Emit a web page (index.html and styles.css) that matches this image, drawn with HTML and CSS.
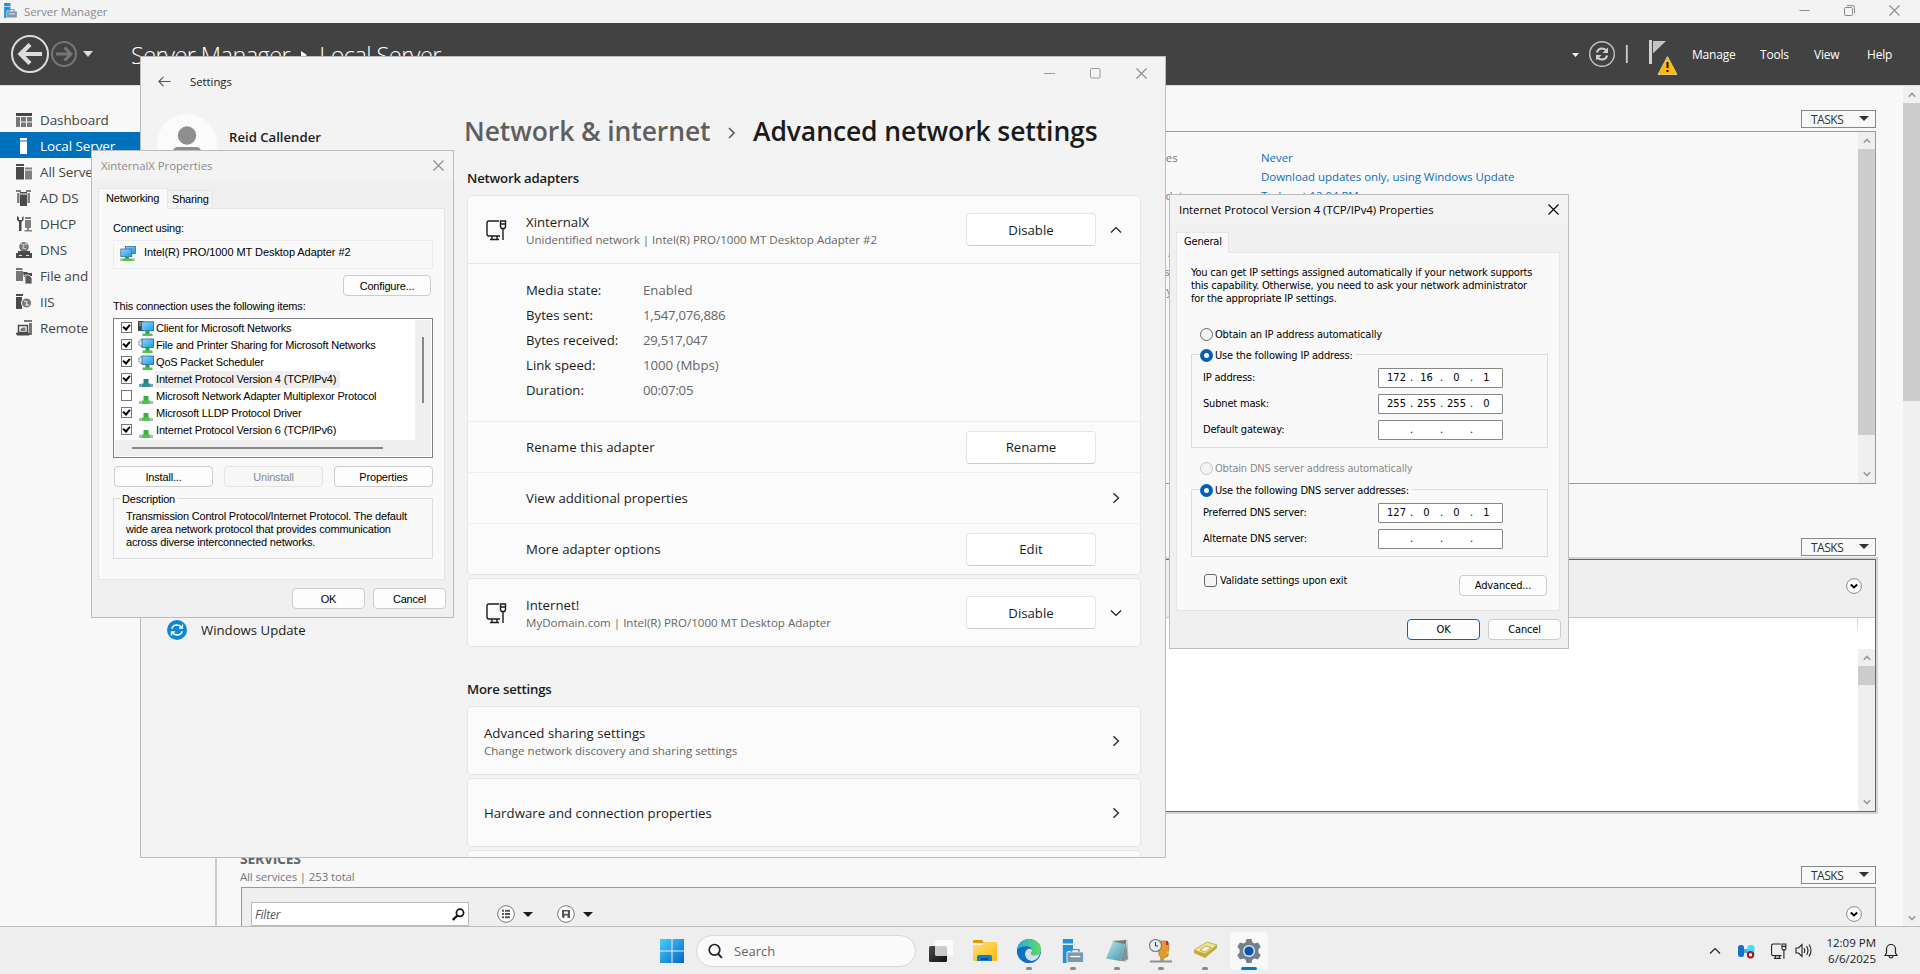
FILE: index.html
```html
<!DOCTYPE html>
<html lang="en">
<head>
<meta charset="utf-8">
<title>Server Manager</title>
<link rel="stylesheet" href="styles.css">
</head>
<body>
<svg class="defs" width="0" height="0">
  <defs>
    <linearGradient id="gWin" x1="0" y1="0" x2="1" y2="1"><stop offset="0" stop-color="#4ccdfb"/><stop offset="1" stop-color="#0067c9"/></linearGradient>
    <linearGradient id="gScr" x1="0" y1="0" x2="1" y2="1"><stop offset="0" stop-color="#8fd6fb"/><stop offset="1" stop-color="#1e9be6"/></linearGradient>
    <linearGradient id="gFold" x1="0" y1="0" x2="1" y2="1"><stop offset="0" stop-color="#ffdf76"/><stop offset="1" stop-color="#fbb812"/></linearGradient>
    <linearGradient id="gEdge" x1="0" y1="0" x2="1" y2="0"><stop offset="0" stop-color="#2aa9e0"/><stop offset="1" stop-color="#5fdc5b"/></linearGradient>
    <linearGradient id="gNote" x1="0" y1="0" x2="1" y2="1"><stop offset="0" stop-color="#b9e6ee"/><stop offset="1" stop-color="#3f93a8"/></linearGradient>
    <linearGradient id="gTask" x1="0" y1="0" x2="1" y2="1"><stop offset="0" stop-color="#4a4a4a"/><stop offset="1" stop-color="#111"/></linearGradient>
  </defs>
  <symbol id="ethernet" viewBox="0 0 22 22"><path d="M14 2H4a2 2 0 0 0-2 2v11a2 2 0 0 0 2 2h11M7 17v3M12 17v3M5 20.500h9" fill="none" stroke="currentColor" stroke-width="1.400"/><path d="M15.500 2h5v6l-1 1.500h-3l-1-1.500zM15.500 5h5M18 10v11" fill="none" stroke="currentColor" stroke-width="1.400"/></symbol>
  <symbol id="right" viewBox="0 0 12 12"><path d="M3.500 1.200 8.500 6l-5 4.800" fill="none" stroke="currentColor" stroke-width="1.200"/></symbol>
  <symbol id="up" viewBox="0 0 12 12"><path d="M1 8.500 6 3.500l5 5" fill="none" stroke="currentColor" stroke-width="1.200"/></symbol>
  <symbol id="down" viewBox="0 0 12 12"><path d="M1 3.500l5 5 5-5" fill="none" stroke="currentColor" stroke-width="1.200"/></symbol>
  <symbol id="sup" viewBox="0 0 8 8"><path d="M.800 5.800 4 2.400l3.200 3.400" fill="none" stroke="#999" stroke-width="1.600"/></symbol>
  <symbol id="sdown" viewBox="0 0 8 8"><path d="M.800 2.200 4 5.600l3.200-3.400" fill="none" stroke="#999" stroke-width="1.600"/></symbol>
  <symbol id="close" viewBox="0 0 11 11"><path d="M.500.500l10 10M10.500.500l-10 10" fill="none" stroke="currentColor" stroke-width="1.100"/></symbol>
  <symbol id="tri" viewBox="0 0 10 5"><path d="M0 0h10L5 5z" fill="currentColor"/></symbol>
  <symbol id="adapter" viewBox="0 0 16 16"><rect x="5.500" y="1.500" width="10" height="7" fill="url(#gScr)" stroke="#3b6c92" stroke-width=".8"/><rect x=".8" y="4" width="11" height="7.500" fill="url(#gScr)" stroke="#3b6c92" stroke-width=".8"/><path d="M5 12h4v2H5z" fill="#2ea233"/><path d="M2 13.500h11V16H2z" fill="#4cc352"/><path d="M0 13.500h2.500V16H0zM12.500 13.500H15V16h-2.500z" fill="#bbb"/></symbol>
  <symbol id="client" viewBox="0 0 16 16"><path d="M0 0h6v10H0z" fill="#444"/><path d="M1 2h2M1 4h2" stroke="#7fdc7f"/><rect x="3.500" y=".8" width="12" height="9" fill="url(#gScr)" stroke="#2d6089" stroke-width=".8"/><path d="M7.500 10h4v3h-4z" fill="#2ea233"/><path d="M4.500 12.500h10V15h-10z" fill="#4cc352"/></symbol>
  <symbol id="service" viewBox="0 0 16 16"><circle cx="4" cy="5" r="3.300" fill="#eee" stroke="#8a959c" stroke-width="1.500" stroke-dasharray="1.600 1"/><rect x="4" y="1" width="11.500" height="8.500" fill="url(#gScr)" stroke="#2d6089" stroke-width=".8"/><path d="M7.500 10h4v3h-4z" fill="#2ea233"/><path d="M4.500 12.500h10V15h-10z" fill="#4cc352"/></symbol>
  <symbol id="proto" viewBox="0 0 16 16"><path d="M5.500 7h5v6h-5z" fill="#3fae42"/><path d="M3.500 11.500h9V15h-9z" fill="#4cc352"/><path d="M1 12h2.500v3H1zM12.500 12H15v3h-2.500z" fill="#b5b5b5"/></symbol>
  <symbol id="protosel" viewBox="0 0 16 16"><path d="M5.500 7h5v6h-5z" fill="#23808a"/><path d="M3.500 11.500h9V15h-9z" fill="#2b949a"/><path d="M1 12h2.500v3H1zM12.500 12H15v3h-2.500z" fill="#6f98c4"/></symbol>
  <symbol id="smgr" viewBox="0 0 24 26"><path d="M1 0h11v5H1zM1 6.500h11V26H1z" fill="#2291dd"/><path d="M9 13h2l1.500-2.500h7L21 13h3v13H5V15q0-2 2-2z" fill="#eef2f4"/><path d="M6 14.500h17V25H6z" fill="#7b98ac"/><path d="M10.500 14v-2.500h8V14M9 19h11M10.500 17.500 9 19l1.500 1.500M18.500 17.500 20 19l-1.500 1.500" fill="none" stroke="#6e8da3" stroke-width="1.500"/><path d="M9 19h11" stroke="#fff" stroke-width="1.500"/></symbol>
</svg>

<div class="desktop">
  <div class="sm">
    <div class="sm-title">
      <svg width="15" height="15"><use href="#smgr"/></svg><span class="s12 grow">Server Manager</span>
      <svg width="11" height="11" viewBox="0 0 11 11"><path d="M.500 5.500h10" stroke="#888"/></svg>
      <svg width="11" height="11" viewBox="0 0 11 11"><path d="M.5 3.500a1 1 0 0 1 1-1h6a1 1 0 0 1 1 1v6a1 1 0 0 1-1 1h-6a1 1 0 0 1-1-1zM3 .6h5.500a2 2 0 0 1 2 2V8" fill="none" stroke="#888"/></svg>
      <svg width="11" height="11" class="grey"><use href="#close"/></svg>
    </div>
    <div class="sm-head">
      <svg width="84" height="40" viewBox="0 0 84 40"><circle cx="20" cy="20" r="18" fill="none" stroke="#dcdcdc" stroke-width="2"/><path d="M32 20H11M20 10.500 10.500 20l9.500 9.500" fill="none" stroke="#dcdcdc" stroke-width="4.200"/><circle cx="54" cy="20" r="12" fill="none" stroke="#777" stroke-width="2"/><path d="M46 20h14M54.500 13.500 61 20l-6.500 6.500" fill="none" stroke="#777" stroke-width="3"/><path d="M73 17h10l-5 6z" fill="#dcdcdc"/></svg>
      <div class="crumb"><span class="c1">Server Manager</span><i></i><span class="c2">Local Server</span></div>
      <svg class="tools" width="110" height="40" viewBox="0 0 110 40"><path d="M2 19h7l-3.500 4z" fill="#fff"/><circle cx="32" cy="20" r="12.300" fill="none" stroke="#c4c4c4" stroke-width="1.400"/><path d="M27 18.500q1-4 5-4 3 0 4.500 2.200M37 21.500q-1 4-5 4-3 0-4.500-2.200" fill="none" stroke="#d0d0d0" stroke-width="2.200"/><path d="M38 13.500v5.500h-5.500zM26 26.500V21h5.500z" fill="#d0d0d0"/><path d="M56.800 11v18" stroke="#d0d0d0" stroke-width="1.800"/><path d="M79 6h3v24h-3z" fill="#d0d0d0"/><path d="M83 7h13L83 19.500z" fill="#c4c4c4"/><path d="M97.500 22.500 107 40.500H88z" fill="#ffb900" stroke="#e9d9a0" stroke-width=".8"/><path d="M97.500 28v6M97.500 36v2" stroke="#111" stroke-width="2"/></svg>
      <nav><span>Manage</span><span>Tools</span><span>View</span><span>Help</span></nav>
    </div>
    <div class="sm-body">
      <aside>
        <div class="it"><svg width="16" height="16" viewBox="0 0 16 16"><path d="M0 1h16v3H0z" fill="#444"/><path d="M0 5h4v10H0zM5 5h5v4.500H5zM11 5h5v4.500h-5zM5 10.500h5V15H5zM11 10.500h5V15h-5z" fill="#777"/></svg>Dashboard</div>
        <div class="it on"><svg width="16" height="16" viewBox="0 0 16 16"><path d="M4 0h7v2.500H4zM4 3.500h7V16H4z" fill="#fff"/></svg>Local Server</div>
        <div class="it"><svg width="16" height="16" viewBox="0 0 16 16"><path d="M0 0h8v2H0zM0 3h8v12.500H0z" fill="#4a4a4a"/><path d="M9 3.500h7v2H9zM9 6.500h7v9H9z" fill="#808080"/></svg>All Servers</div>
        <div class="it"><svg width="16" height="16" viewBox="0 0 16 16"><path d="M0 0h5v2H0zM10 0h5v2h-5zM1 3h2.500v10H1zM11.500 3H14v10h-2.500z" fill="#808080"/><path d="M4 2h7v1.500H4zM4 4.500h7V16H4z" fill="#4a4a4a"/></svg>AD DS</div>
        <div class="it"><svg width="16" height="16" viewBox="0 0 16 16"><path d="M1 0v4l2 2v9h2.500V6l2-2V0L6 1.500V4H3V1.500z" fill="#4a4a4a"/><path d="M9 1h6v2H9zM9 4h6v8H9zM11 12h2v2h3v1.500H8.500V14H11z" fill="#808080"/></svg>DHCP</div>
        <div class="it"><svg width="16" height="16" viewBox="0 0 16 16"><circle cx="8" cy="4.800" r="4.800" fill="#777"/><path d="M5 2l3 1-1 3 3 1M9 1l2 2" stroke="#ccc" fill="none" stroke-width="1.300"/><path d="M2 9h12v2H2zM0 11h16v5H0z" fill="#4a4a4a"/><path d="M3 13.500h3M10 13.500h3" stroke="#ddd"/></svg>DNS</div>
        <div class="it"><svg width="16" height="16" viewBox="0 0 16 16"><path d="M0 0h6l1 2H0zM0 3h7v10H0z" fill="#777"/><path d="M7 4h4l1 1h4v3h-3L8 9z" fill="#4a4a4a"/><path d="M9 7h4l3 3v6H9z" fill="#5a5a5a" stroke="#f8f8f8" stroke-width=".8"/></svg>File and Storage</div>
        <div class="it"><svg width="16" height="16" viewBox="0 0 16 16"><path d="M0 0h7v2H0zM0 3h6v12H0z" fill="#4a4a4a"/><circle cx="10.500" cy="9" r="5" fill="#777" stroke="#f8f8f8"/><path d="M8 7l3 1-1 3 3 0" stroke="#ddd" fill="none" stroke-width="1.300"/></svg>IIS</div>
        <div class="it"><svg width="16" height="16" viewBox="0 0 16 16"><path d="M8 0h8v2H8zM13 3h3v12h-3z" fill="#777"/><path d="M2.500 5.500h9v7h-9zM0 13.500h13" fill="none" stroke="#4a4a4a" stroke-width="1.500"/><path d="M4.500 11V9l2-1.500h3V11z" fill="#777"/><path d="M0 13h14l-1 2.500H1z" fill="#4a4a4a"/></svg>Remote Access</div>
      </aside>
      <main>
        <section class="sec1">
          <div class="sechead"><div class="tasks"><span>TASKS</span><svg width="10" height="5"><use href="#tri"/></svg></div></div>
          <div class="panel p1">
            <div class="props">
              <span>Last installed updates</span><b>Never</b>
              <span>Windows Update</span><b>Download updates only, using Windows Update</b>
              <span>Last checked for updates</span><b>Today at 12:04 PM</b>
              <span></span><b></b><span></span><b></b>
              <span>Microsoft Defender Antivirus</span><b></b>
              <span>Feedback &amp; Diagnostics</span><b></b>
              <span>IE Enhanced Security Config</span><b></b>
            </div>
            <div class="sb"><svg width="8" height="8"><use href="#sup"/></svg><i></i><svg width="8" height="8"><use href="#sdown"/></svg></div>
          </div>
        </section>
        <section class="sec2">
          <div class="sechead"><div class="tasks"><span>TASKS</span><svg width="10" height="5"><use href="#tri"/></svg></div></div>
          <div class="panel p2">
            <div class="bar"><svg width="16" height="16" viewBox="0 0 16 16"><circle cx="8" cy="8" r="7.400" fill="#fff" stroke="#8a8a8a"/><path d="M4.800 6.500 8 9.500l3.200-3" fill="none" stroke="#000" stroke-width="2"/></svg></div>
            <div class="thead"></div>
            <div class="sb"><svg width="8" height="8"><use href="#sup"/></svg><i></i><svg width="8" height="8"><use href="#sdown"/></svg></div>
          </div>
        </section>
        <section class="sec3">
          <div class="sechead"><div class="ttl"><h2>SERVICES</h2><p>All services | 253 total</p></div><div class="tasks"><span>TASKS</span><svg width="10" height="5"><use href="#tri"/></svg></div></div>
          <div class="panel p3">
            <div class="filter"><em>Filter</em><svg width="13" height="13" viewBox="0 0 13 13"><circle cx="8" cy="4.800" r="3.600" fill="none" stroke="#111" stroke-width="1.700"/><path d="M5.500 7.500.800 12" stroke="#111" stroke-width="2.400"/></svg></div>
            <div class="pick"><svg width="18" height="18" viewBox="0 0 18 18"><circle cx="9" cy="9" r="8.300" fill="#fff" stroke="#777"/><path d="M5 5.800h2M5 9h2M5 12.200h2M8 5.800h5M8 9h5M8 12.200h5" stroke="#555" stroke-width="2"/></svg><svg width="10" height="5"><use href="#tri"/></svg></div>
            <div class="pick"><svg width="18" height="18" viewBox="0 0 18 18"><circle cx="9" cy="9" r="8.300" fill="#fff" stroke="#777"/><path d="M5 5h8v8H6l-1-1zM7 6.500v2.300h4V6.500zM7.500 13v-2.500h3V13z" fill="#555" fill-rule="evenodd"/></svg><svg width="10" height="5"><use href="#tri"/></svg></div>
            <svg class="exp" width="16" height="16" viewBox="0 0 16 16"><circle cx="8" cy="8" r="7.400" fill="#fff" stroke="#8a8a8a"/><path d="M4.800 6.500 8 9.500l3.200-3" fill="none" stroke="#000" stroke-width="2"/></svg>
          </div>
        </section>
      </main>
      <div class="sb big"><svg width="8" height="8"><use href="#sup"/></svg><i></i><svg width="8" height="8"><use href="#sdown"/></svg></div>
    </div>
  </div>

  <div class="taskbar">
    <div class="tb-mid">
      <svg class="start" width="24" height="24" viewBox="0 0 24 24"><path d="M0 0h11.500v11.500H0zM12.500 0H24v11.500H12.500zM0 12.500h11.500V24H0zM12.500 12.500H24V24H12.500z" fill="url(#gWin)"/></svg>
      <div class="search"><svg width="16" height="16" viewBox="0 0 16 16"><circle cx="7.500" cy="6.800" r="5.300" fill="none" stroke="#222" stroke-width="1.700"/><path d="M11.200 10.800l3.600 4" stroke="#222" stroke-width="2"/></svg><span>Search</span></div>
      <div class="app"><svg width="24" height="24" viewBox="0 0 24 24"><rect y="7" width="18" height="16" rx="1.500" fill="url(#gTask)"/><rect x="6" y="1" width="18" height="16" rx="1.500" fill="#fff" opacity=".75"/></svg></div>
      <div class="app"><svg width="24" height="24" viewBox="0 0 24 24"><path d="M0 2q0-1 1-1h8l2 3H0z" fill="#d99a00"/><path d="M0 6h9l2-3h12q1 0 1 1v18H0z" fill="url(#gFold)"/><path d="M4 22v-4q0-2 2-2h11q2 0 2 2v4z" fill="#0f7bd0"/><path d="M8 20h7" stroke="#0a4f94" stroke-width="2"/></svg></div>
      <div class="app run"><svg width="24" height="24" viewBox="0 0 24 24"><circle cx="12" cy="12" r="12" fill="#0f64b4"/><path d="M.500 10C2 3 7 0 12 0c7 0 12 5 12 10.500 0 4-3 6-6.500 6-2.500 0-3.500-1-3.500-2 0-.8 1-1.500 1-3 0-2-2-4-5-4C5 7.500 1 11 .500 10z" fill="url(#gEdge)"/><path d="M8 15c0-3 2-5.500 4-5.500 2 0 3 1 3 2s-1 2-1 3 1 2 3.500 2c2 0 4-.7 5.500-2.500-1 5-5 8-8.500 8C11 22 8 19 8 15z" fill="#ededed" opacity=".9"/><path d="M8 15c0 5 4 7 7 7 2 0 4-.6 5.500-2C18 23 15 24 12 24 6 24 .500 19 .300 13 .500 9 4 7.500 8 7.500c2.500 0 5 .8 6.200 2.200C11 8.500 8 11 8 15z" fill="#0d72c6"/></svg></div>
      <div class="app run"><svg width="24" height="24"><use href="#smgr"/></svg></div>
      <div class="app run"><svg width="24" height="24" viewBox="0 0 24 24"><path d="M8 2 22 1l1 19-3 3-3-2z" fill="#e9e9e9" stroke="#999" stroke-width=".5"/><path d="M8 2.500h13L15 22 1 19.500z" fill="url(#gNote)"/><path d="M8 2.500 21 1v3l-1 1z" fill="#777"/><path d="M21 3l2 17-4 2-4 0z" fill="#7e929a"/></svg></div>
      <div class="app run"><svg width="24" height="24" viewBox="0 0 24 24"><path d="M9 2h8l3 2-1 13-6 3-3-4z" fill="#e59a2d" stroke="#9a6417" stroke-width=".6"/><path d="M17 2h2v4h-2z" fill="#d22"/><path d="M18 12h2v3h-2z" fill="#e8c21b"/><circle cx="6.500" cy="6.500" r="6" fill="#e8edf2" stroke="#7b7f84" stroke-width="1.200"/><path d="M6.500 3v4H9" stroke="#333" fill="none"/><path d="M11 18h4v4h-4z" fill="#c9a240"/><path d="M1 21.500h22v2H1z" fill="#8c9298"/></svg></div>
      <div class="app run"><svg width="24" height="24" viewBox="0 0 24 24"><path d="M1 11 14 3l10 3-12 9z" fill="#f3e58a" stroke="#a08b27" stroke-width=".6"/><path d="M1 11l11 4v4L1 14zM12 15l12-9v3l-12 10z" fill="#c5a93a"/><path d="M7 11l6-4 5 1.500-6 4.500z" fill="#fffbe0" stroke="#8a7a2a" stroke-width=".6"/></svg></div>
      <div class="app act"><svg width="24" height="24" viewBox="0 0 24 24"><path d="M9.500 0h5l.8 3.300 2.200 1.200L21 3.500l2.700 4.300-2.300 2.700v3l2.300 2.700L21 20.500l-3.500-1-2.200 1.200-.8 3.300h-5l-.8-3.300-2.200-1.200-3.500 1L.300 16.200l2.300-2.700v-3L.300 7.800 3 3.500l3.500 1 2.200-1.200z" fill="#74808b"/><circle cx="12" cy="12" r="6" fill="#dfe9f2"/><circle cx="12" cy="12" r="4.600" fill="#0b57b0"/></svg></div>
    </div>
    <div class="tray">
      <svg width="12" height="12"><use href="#up"/></svg>
      <svg class="t2" width="17" height="16" viewBox="0 0 17 16"><rect y="2" width="6" height="12" rx="2.500" fill="#1173cf"/><path d="M6 6h4v4H6z" fill="#4aa6e4"/><rect x="9.500" y="2" width="7" height="11" rx="2.500" fill="#45ddf5"/><circle cx="12.500" cy="11.800" r="2.700" fill="#fff" stroke="#b01018" stroke-width="2"/></svg>
      <svg class="t3" width="17" height="18"><use href="#ethernet"/></svg>
      <svg class="t4" width="17" height="15" viewBox="0 0 17 15"><path d="M1 5h2.500L7 1.500v12L3.500 10H1z" fill="none" stroke="#222" stroke-width="1.100"/><path d="M9 5q1.500 2.500 0 5M11.500 3q3 4.500 0 9M14 1.500q4 6 0 12" fill="none" stroke="#222" stroke-width="1.100"/></svg>
      <div class="clock"><div>12:09 PM</div><div>6/6/2025</div></div>
      <svg class="t5" width="14" height="16" viewBox="0 0 14 16"><path d="M1 12.500 2.500 10V6a4.500 4.500 0 0 1 9 0v4l1.500 2.500zM5 13q.5 2 2 2t2-2" fill="none" stroke="#222" stroke-width="1.200"/></svg>
    </div>
  </div>

  <div class="win settings">
    <div class="st-side">
      <div class="st-top"><svg width="13" height="11" viewBox="0 0 13 11"><path d="M12.500 5.500H1M5.500.800.800 5.500l4.700 4.700" fill="none" stroke="#555" stroke-width="1.100"/></svg><span class="s12">Settings</span></div>
      <div class="user"><svg width="60" height="60" viewBox="0 0 60 60"><circle cx="30" cy="30" r="30" fill="#fbfbfb"/><circle cx="30" cy="21.500" r="9.200" fill="#8e8e8e"/><path d="M16 45V38q0-5 5-5h18q5 0 5 5v7q-14 10-28 0z" fill="#8e8e8e"/></svg><div><b>Reid Callender</b><span>reid.callender@mydomain.com</span></div></div>
      <div class="wu"><svg width="20" height="20" viewBox="0 0 20 20"><circle cx="10" cy="10" r="10" fill="#0f87d9"/><path d="M4.800 8.800Q6 5 10 5q3 0 4.700 2.500M15.200 11.200Q14 15 10 15q-3 0-4.700-2.500" fill="none" stroke="#fff" stroke-width="1.500"/><path d="M15.500 4.500V8H12M4.500 15.500V12H8" fill="none" stroke="#fff" stroke-width="1.300"/></svg><span>Windows Update</span></div>
    </div>
    <div class="st-main">
      <div class="st-ctl"><svg width="11" height="11" viewBox="0 0 11 11"><path d="M0 5.500h11" stroke="#999"/></svg><svg width="11" height="11" viewBox="0 0 11 11"><rect x=".5" y=".5" width="9.500" height="9.500" rx="1" fill="none" stroke="#999"/></svg><svg width="11" height="11" class="grey"><use href="#close"/></svg></div>
      <h1><span class="h-a">Network &amp; internet</span><svg width="10" height="14" viewBox="0 0 10 14"><path d="M2 2l5 5-5 5" fill="none" stroke="#5f5f5f" stroke-width="1.700"/></svg><span class="h-b">Advanced network settings</span></h1>
      <h3 class="na">Network adapters</h3>
      <div class="card">
        <div class="crow tall"><svg class="eth" width="22" height="22"><use href="#ethernet"/></svg><div class="tx"><div>XinternalX</div><small>Unidentified network | Intel(R) PRO/1000 MT Desktop Adapter #2</small></div><button>Disable</button><svg class="ch" width="12" height="12"><use href="#up"/></svg></div>
        <dl><dt>Media state:</dt><dd>Enabled</dd><dt>Bytes sent:</dt><dd class="nm">1,547,076,886</dd><dt>Bytes received:</dt><dd class="nm">29,517,047</dd><dt>Link speed:</dt><dd>1000 (Mbps)</dd><dt>Duration:</dt><dd class="nm">00:07:05</dd></dl>
        <div class="crow ind"><div class="tx">Rename this adapter</div><button>Rename</button></div>
        <div class="crow ind nb"><div class="tx">View additional properties</div><svg class="ch" width="12" height="12"><use href="#right"/></svg></div>
        <div class="crow ind"><div class="tx">More adapter options</div><button>Edit</button></div>
      </div>
      <div class="card next"><div class="crow tall"><svg class="eth" width="22" height="22"><use href="#ethernet"/></svg><div class="tx"><div>Internet!</div><small>MyDomain.com | Intel(R) PRO/1000 MT Desktop Adapter</small></div><button>Disable</button><svg class="ch" width="12" height="12"><use href="#down"/></svg></div></div>
      <h3 class="ms">More settings</h3>
      <div class="card"><div class="crow tall nb"><div class="tx"><div>Advanced sharing settings</div><small>Change network discovery and sharing settings</small></div><svg class="ch" width="12" height="12"><use href="#right"/></svg></div></div>
      <div class="card next"><div class="crow tall nb"><div class="tx">Hardware and connection properties</div><svg class="ch" width="12" height="12"><use href="#right"/></svg></div></div>
      <div class="card next"><div class="crow tall"></div></div>
    </div>
  </div>

  <div class="win dlg xd">
    <div class="dt grey"><span class="s12">XinternalX Properties</span><svg width="11" height="11"><use href="#close"/></svg></div>
    <div class="tabs"><div class="tab on">Networking</div><div class="tab">Sharing</div></div>
    <div class="pane">
      <label class="l1">Connect using:</label>
      <div class="nic"><svg width="16" height="16"><use href="#adapter"/></svg><span>Intel(R) PRO/1000 MT Desktop Adapter #2</span></div>
      <div class="right"><div class="btn w88">Configure...</div></div>
      <label class="l2">This connection uses the following items:</label>
      <div class="list">
        <div class="lrow">
          <div class="items">
            <div class="li"><i class="ck on"></i><svg width="16" height="16"><use href="#client"/></svg><span>Client for Microsoft Networks</span></div>
            <div class="li"><i class="ck on"></i><svg width="16" height="16"><use href="#service"/></svg><span>File and Printer Sharing for Microsoft Networks</span></div>
            <div class="li"><i class="ck on"></i><svg width="16" height="16"><use href="#service"/></svg><span>QoS Packet Scheduler</span></div>
            <div class="li sel"><i class="ck on"></i><svg width="16" height="16"><use href="#protosel"/></svg><span>Internet Protocol Version 4 (TCP/IPv4)</span></div>
            <div class="li"><i class="ck"></i><svg width="16" height="16"><use href="#proto"/></svg><span>Microsoft Network Adapter Multiplexor Protocol</span></div>
            <div class="li"><i class="ck on"></i><svg width="16" height="16"><use href="#proto"/></svg><span>Microsoft LLDP Protocol Driver</span></div>
            <div class="li"><i class="ck on"></i><svg width="16" height="16"><use href="#proto"/></svg><span>Internet Protocol Version 6 (TCP/IPv6)</span></div>
          </div>
          <div class="vs"><i></i></div>
        </div>
        <div class="hs"><i></i></div>
      </div>
      <div class="brow"><div class="btn w99">Install...</div><div class="btn w99 dis">Uninstall</div><div class="btn w99">Properties</div></div>
      <fieldset><legend>Description</legend><p>Transmission Control Protocol/Internet Protocol. The default<br>wide area network protocol that provides communication<br>across diverse interconnected networks.</p></fieldset>
    </div>
    <div class="foot"><div class="btn w73">OK</div><div class="btn w73">Cancel</div></div>
  </div>

  <div class="win dlg ip">
    <div class="dt"><span class="s12">Internet Protocol Version 4 (TCP/IPv4) Properties</span><svg width="11" height="11"><use href="#close"/></svg></div>
    <div class="tabs"><div class="tab on">General</div></div>
    <div class="pane">
      <p>You can get IP settings assigned automatically if your network supports<br>this capability. Otherwise, you need to ask your network administrator<br>for the appropriate IP settings.</p>
      <div class="rad r1"><i></i><span>Obtain an IP address automatically</span></div>
      <div class="grp g1">
        <div class="rad"><i class="on"></i><span>Use the following IP address:</span></div>
        <div class="fr"><label>IP address:</label><div class="ipf"><b>172</b><u>.</u><b>16</b><u>.</u><b>0</b><u>.</u><b>1</b></div></div>
        <div class="fr"><label>Subnet mask:</label><div class="ipf"><b>255</b><u>.</u><b>255</b><u>.</u><b>255</b><u>.</u><b>0</b></div></div>
        <div class="fr"><label>Default gateway:</label><div class="ipf"><b></b><u>.</u><b></b><u>.</u><b></b><u>.</u><b></b></div></div>
      </div>
      <div class="rad r3 dis"><i></i><span>Obtain DNS server address automatically</span></div>
      <div class="grp g2">
        <div class="rad"><i class="on"></i><span>Use the following DNS server addresses:</span></div>
        <div class="fr"><label>Preferred DNS server:</label><div class="ipf"><b>127</b><u>.</u><b>0</b><u>.</u><b>0</b><u>.</u><b>1</b></div></div>
        <div class="fr"><label>Alternate DNS server:</label><div class="ipf"><b></b><u>.</u><b></b><u>.</u><b></b><u>.</u><b></b></div></div>
      </div>
      <div class="val"><i></i><span>Validate settings upon exit</span><div class="btn w88">Advanced...</div></div>
    </div>
    <div class="foot"><div class="btn w73 def">OK</div><div class="btn w73">Cancel</div></div>
  </div>
</div>
</body>
</html>
```
FILE: styles.css
```css
* { box-sizing: border-box; }
body, h1, h2, h3, p, dl, dd, fieldset { margin: 0; padding: 0; }
body { font-family: "Open Sans", "Noto Sans", sans-serif; font-size: 13px; color: #1b1b1b; overflow: hidden; }
svg { display: block; flex: none; }
.defs { position: absolute; }
.desktop { position: relative; width: 1920px; height: 974px; overflow: hidden; display: flex; flex-direction: column; }
.s12 { font-size: 11.4px; letter-spacing: -0.05px; white-space: nowrap; }
.grow { flex: 1; }
.grey { color: #8c8c8c; }

/* Server Manager */
.sm { height: 926px; display: flex; flex-direction: column; background: #f8f8f8; }
.sm-title { height: 23px; flex: none; background: #f3f3f3; display: flex; align-items: center; gap: 34px; padding: 0 20px 3px 3px; color: #8a8a8a; }
.sm-title .s12 { margin-left: -28px; padding-top: 3px; }
.sm-head { height: 63px; flex: none; background: #424242; border-bottom: 1px solid #ddd; display: flex; align-items: center; padding: 0 28px 0 10px; color: #fff; }
.crumb { flex: 1; display: flex; align-items: center; margin-left: 37px; padding-top: 2px; font-size: 23.500px; font-weight: 300; white-space: nowrap; }
.crumb i { border: 4px solid transparent; border-left: 6px solid #fff; border-right: 0; margin: 0 12px 0 11px; }
.c1, .c2 { letter-spacing: -0.57px; }
.tools { overflow: visible; }
.sm-head nav { display: flex; font-size: 12px; letter-spacing: -0.2px; margin-left: 12px; }
.sm-head nav span { width: 68px; }
.sm-head nav span:nth-child(2) { width: 54px; }
.sm-head nav span:nth-child(3) { width: 53px; }
.sm-head nav span:nth-child(4) { width: 25px; }
.sm-body { flex: 1; min-height: 0; display: flex; overflow: hidden; }
aside { width: 217px; border-right: 2px solid #ccc; padding-top: 20px; }
.it { height: 26px; display: flex; align-items: center; gap: 8px; padding: 1px 0 0 16px; font-size: 13.500px; color: #444; letter-spacing: -0.1px; white-space: nowrap; }
.it.on { background: #0072bd; color: #fff; }
main { flex: 1; min-width: 0; padding: 24px 27px 0 24px; display: flex; flex-direction: column; }
.sec2 { margin-top: 54px; }
.sec3 { margin-top: 37px; }
.sechead { display: flex; justify-content: flex-end; align-items: flex-end; margin-bottom: 3px; }
.ttl { flex: 1; height: 35px; margin-left: -1px; color: #777; }
.ttl h2 { font-size: 14px; line-height: 20px; letter-spacing: -0.3px; color: #666; }
.ttl p { font-size: 11.500px; line-height: 15px; letter-spacing: -0.15px; }
.tasks { width: 75px; height: 18px; border: 1px solid #888; display: flex; align-items: center; justify-content: space-between; padding: 0 6px 0 9px; font-size: 12px; letter-spacing: -0.5px; color: #333; }
.tasks svg { margin-bottom: 1px; }
.panel { border: 1px solid #999; display: flex; }
.p1 { height: 353px; }
.props { flex: 1; display: grid; grid-template-columns: 199px 1fr; grid-auto-rows: 19px; align-content: start; padding: 16px 0 0 820px; font-size: 11.500px; letter-spacing: -0.05px; line-height: 19px; color: #777; white-space: nowrap; }
.props b { font-weight: 400; color: #0b70bd; }
.sb { width: 17px; background: #efefef; display: flex; flex-direction: column; align-items: center; padding: 5px 0; }
.sb i { width: 17px; background: #cdcdcd; margin-top: 4px; height: 286px; }
.sb svg:last-child { margin-top: auto; }
.big { background: #f0f0f0; }
.big i { height: 298px; }
.big svg:last-child { margin-bottom: -1px; }
.p2 { height: 253px; border-color: #666; background: #fff; box-shadow: 0 0 0 2px #d6d6d6; flex-direction: column; }
.p2 .bar { height: 58px; background: #efefef; border-bottom: 1px solid #c4c4c4; display: flex; justify-content: flex-end; padding: 18px 13px 0 0; }
.thead { height: 31px; margin-right: 17px; background: linear-gradient(#ccc, #fff 60%) right / 1px 100% no-repeat; }
.p2 .sb { flex: 1; align-self: flex-end; }
.p2 .sb i { height: 19px; }
.p3 { height: 60px; background: #efefef; padding: 14px 13px 0 9px; align-items: flex-start; }
.filter { width: 218px; height: 24px; border: 1px solid #bbb; background: #fff; display: flex; align-items: center; justify-content: space-between; padding: 0 3px; font-size: 12px; color: #555; }
.filter em { letter-spacing: -0.2px; }
.pick { display: flex; align-items: center; gap: 8px; margin: 3px 0 0 28px; }
.pick + .pick { margin-left: 24px; }
.exp { margin: 4px 0 0 auto; }

/* Taskbar */
.taskbar { height: 48px; background: #eee; border-top: 1px solid #bdbdbd; display: flex; justify-content: space-between; }
.tb-mid { display: flex; align-items: center; margin-left: 660px; }
.search { width: 220px; height: 32px; border: 1px solid #d8d8d8; border-radius: 16px; background: #fafafa; margin: 0 6px 0 12px; display: flex; align-items: center; gap: 11px; padding-left: 10px; font-size: 13px; color: #666; }
.app { width: 38px; height: 38px; margin-right: 6px; border-radius: 4px; display: flex; flex-direction: column; align-items: center; padding-top: 7px; }
.run::after { content: ""; width: 6px; height: 3px; border-radius: 2px; background: #8a8a8a; margin-top: 4px; }
.act { background: #f9f9f9; }
.act::after { content: ""; width: 16px; height: 3px; border-radius: 2px; background: #0078d4; margin-top: 4px; }
.tray { display: flex; align-items: center; padding-right: 22px; color: #222; }
.t2 { margin-left: 17px; }
.t3 { margin-left: 15px; }
.t4 { margin-left: 8px; }
.clock { width: 64px; text-align: right; font-size: 11.500px; line-height: 16px; }
.t5 { margin-left: 8px; }

/* Window frames */
.win { position: absolute; border: 1px solid #bcbcbc; overflow: hidden; }
.settings { left: 140px; top: 56px; width: 1026px; height: 802px; background: #f3f3f3; display: flex; }
.st-side { width: 326px; padding-left: 16px; }
.st-top { display: flex; align-items: center; gap: 19px; height: 48px; padding-left: 1px; }
.user { display: flex; gap: 12px; margin-top: 9px; height: 60px; white-space: nowrap; }
.user div { padding-top: 14px; display: flex; flex-direction: column; }
.user b { font-size: 13.200px; line-height: 18px; font-weight: 600; letter-spacing: -0.02px; }
.user span { font-size: 11.300px; line-height: 15px; }
.wu { display: flex; align-items: center; gap: 14px; margin-top: 446px; padding-left: 10px; font-size: 13.200px; height: 20px; }
.st-main { width: 674px; }
.st-ctl { height: 32px; display: flex; align-items: center; justify-content: flex-end; gap: 35px; margin-right: -6px; }
h1 { display: flex; align-items: center; height: 44px; margin: 20px 0 0 -3px; font-size: 26.500px; font-weight: 600; white-space: nowrap; }
h1 svg { margin: 3px 16px 0 18px; }
.h-a { color: #5f5f5f; width: 245px; letter-spacing: -0.1px; }
.h-b { letter-spacing: -0.1px; }
h3 { font-size: 13.200px; line-height: 20px; font-weight: 600; letter-spacing: -0.2px; }
.na { margin: 15px 0 7px; }
.ms { margin: 32px 0 7px; }
.card { border: 1px solid #e5e5e5; border-radius: 4px; background: #fbfbfb; font-size: 13.200px; }
.next { margin-top: 3px; }
.crow { display: flex; align-items: center; height: 51px; border-top: 1px solid #eee; }
.crow button, .crow .ch { margin-left: auto; }
.crow.tall { height: 67px; border-top: 0; padding: 0 18px 0 17px; }
.crow.tall.nb { padding-left: 16px; }
.tall button + .ch { margin-left: 14px; }
.ind { padding: 0 44px 0 58px; }
.ind.nb { padding-right: 18px; }
.eth { margin-right: 19px; }
.tx { line-height: 20px; white-space: nowrap; letter-spacing: 0.03px; }
.tx small { display: block; font-size: 11.550px; line-height: 16px; color: #666; letter-spacing: 0; }
.crow button { width: 130px; height: 33px; font: inherit; color: inherit; background: #fff; border: 1px solid #e5e5e5; border-bottom-color: #ccc; border-radius: 4px; padding: 0; }
dl { display: grid; grid-template-columns: 117px 1fr; grid-auto-rows: 25px; line-height: 25px; border-top: 1px solid #e5e5e5; height: 158px; padding: 14px 0 0 58px; }
dd { color: #666; }
.nm { letter-spacing: -0.25px; }

/* Property dialogs */
.dlg { background: #f0f0f0; font: 11px "Liberation Sans", Arial, sans-serif; letter-spacing: -0.18px; color: #000; white-space: nowrap; }
.xd { left: 91px; top: 150px; width: 363px; height: 468px; }
.dt { height: 30px; background: #f3f3f3; display: flex; justify-content: space-between; align-items: center; padding: 0 9px 2px 9px; font-family: "Open Sans", sans-serif; }
.dt .s12 { padding-top: 1px; }
.tabs { display: flex; align-items: flex-end; height: 27px; padding-left: 6px; position: relative; z-index: 1; }
.tab { height: 18px; border: 1px solid #e5e5e5; border-bottom: 0; background: #f3f3f3; padding: 2px 4px 0; width: 46px; margin-left: -1px; }
.tab.on { height: 21px; width: 70px; background: #f9f9f9; padding: 3px 7px 0; margin: 0 0 -1px; }
.pane { margin-left: 6px; width: 347px; height: 372px; background: #f9f9f9; border: 1px solid #e5e5e5; padding: 12px 11px 0 14px; }
.xd .pane > label { display: block; line-height: 14px; }
.nic { height: 29px; border: 1px solid #ececec; margin-top: 5px; display: flex; padding: 3px 6px; gap: 8px; letter-spacing: -0.06px; }
.nic svg { margin-top: 1px; }
.nic span { line-height: 16px; }
.right { display: flex; justify-content: flex-end; padding: 6px 2px 0 0; }
.btn { height: 21px; border: 1px solid #ccc; border-radius: 4px; background: #fdfdfd; text-align: center; line-height: 20px; }
.w88 { width: 88px; }
.w99 { width: 99px; }
.w73 { width: 73px; }
.dis { color: #8a8a8a; }
.btn.dis { background: #f7f7f7; border-color: #e3e3e3; }
.l2 { margin-top: 3px; }
.list { height: 140px; border: 1px solid #7d8088; margin-top: 5px; padding: 1px; background: #fff; }
.lrow { display: flex; height: 120px; }
.items { flex: 1; }
.li { height: 17px; display: flex; align-items: center; padding-left: 6px; }
.ck { width: 11px; height: 11px; border: 1px solid #777; background: #fff; margin: 0 6px 2px 0; position: relative; }
.ck.on::after { content: ""; position: absolute; left: 2px; top: 0; width: 3px; height: 5px; border: solid #000; border-width: 0 2px 2px 0; transform: rotate(40deg); }
.li span { padding: 0 4px 0 1px; margin-left: 1px; line-height: 17px; }
.sel span { background: #efefef; }
.vs { width: 16px; background: #efefef; padding: 17px 7px; }
.vs i { display: block; width: 2px; height: 66px; background: #888; }
.hs { height: 16px; background: #efefef; padding: 7px 17px; }
.hs i { display: block; width: 251px; height: 2px; background: #888; }
.brow { display: flex; justify-content: space-between; padding: 8px 0 0 1px; }
fieldset { position: relative; height: 61px; border: 1px solid #dcdcdc; margin-top: 11px; padding: 11px 12px; }
legend { position: absolute; left: 6px; top: -6px; padding: 0 2px; background: #f9f9f9; line-height: 13px; }
fieldset p { line-height: 13px; }
.foot { display: flex; justify-content: flex-end; gap: 8px; padding: 8px 7px 0 0; }

.ip { left: 1169px; top: 194px; width: 400px; height: 455px; font: 11px "DejaVu Sans Condensed", "Open Sans", sans-serif; letter-spacing: -0.18px; }
.ip .tab.on { width: 53px; padding-top: 2px; }
.ip .pane { width: 384px; height: 359px; padding: 13px 11px 0 14px; }
.ip .pane > p { line-height: 13px; }
.rad { display: flex; align-items: center; gap: 2px; height: 14px; }
.rad i { width: 13px; height: 13px; border: 1px solid #666; border-radius: 50%; background: #f3f3f3; }
.rad i.on { border: 4px solid #0060b9; background: #fff; }
.rad.dis i { border-color: #c4c4c4; }
.r1 { margin: 22px 0 0 9px; }
.grp { border: 1px solid #dcdcdc; margin-top: 13px; padding: 0 0 0 11px; }
.grp .rad { margin: -7px 0 6px -3px; width: fit-content; padding-right: 3px; background: #f9f9f9; }
.grp .fr { display: flex; height: 20px; margin-bottom: 6px; }
.fr label { width: 175px; line-height: 20px; }
.g1 { height: 94px; }
.ipf { width: 125px; height: 20px; border: 1px solid #888; border-radius: 1px; background: #fff; display: flex; line-height: 18px; padding-left: 4px; }
.ipf b { font-weight: 400; width: 27px; text-align: center; letter-spacing: 0; }
.ipf u { text-decoration: none; width: 3px; }
.r3 { margin: 13px 0 0 9px; }
.g2 { height: 68px; margin-top: 14px; }
.val { display: flex; padding: 0 1px 0 13px; margin-top: 17px; }
.val i { width: 13px; height: 13px; border: 1px solid #666; border-radius: 3px; background: #f6f6f6; }
.val span { margin: 0 auto 0 3px; }
.val .btn { margin-top: 1px; }
.btn.def { border-color: #0067c0; }
```
